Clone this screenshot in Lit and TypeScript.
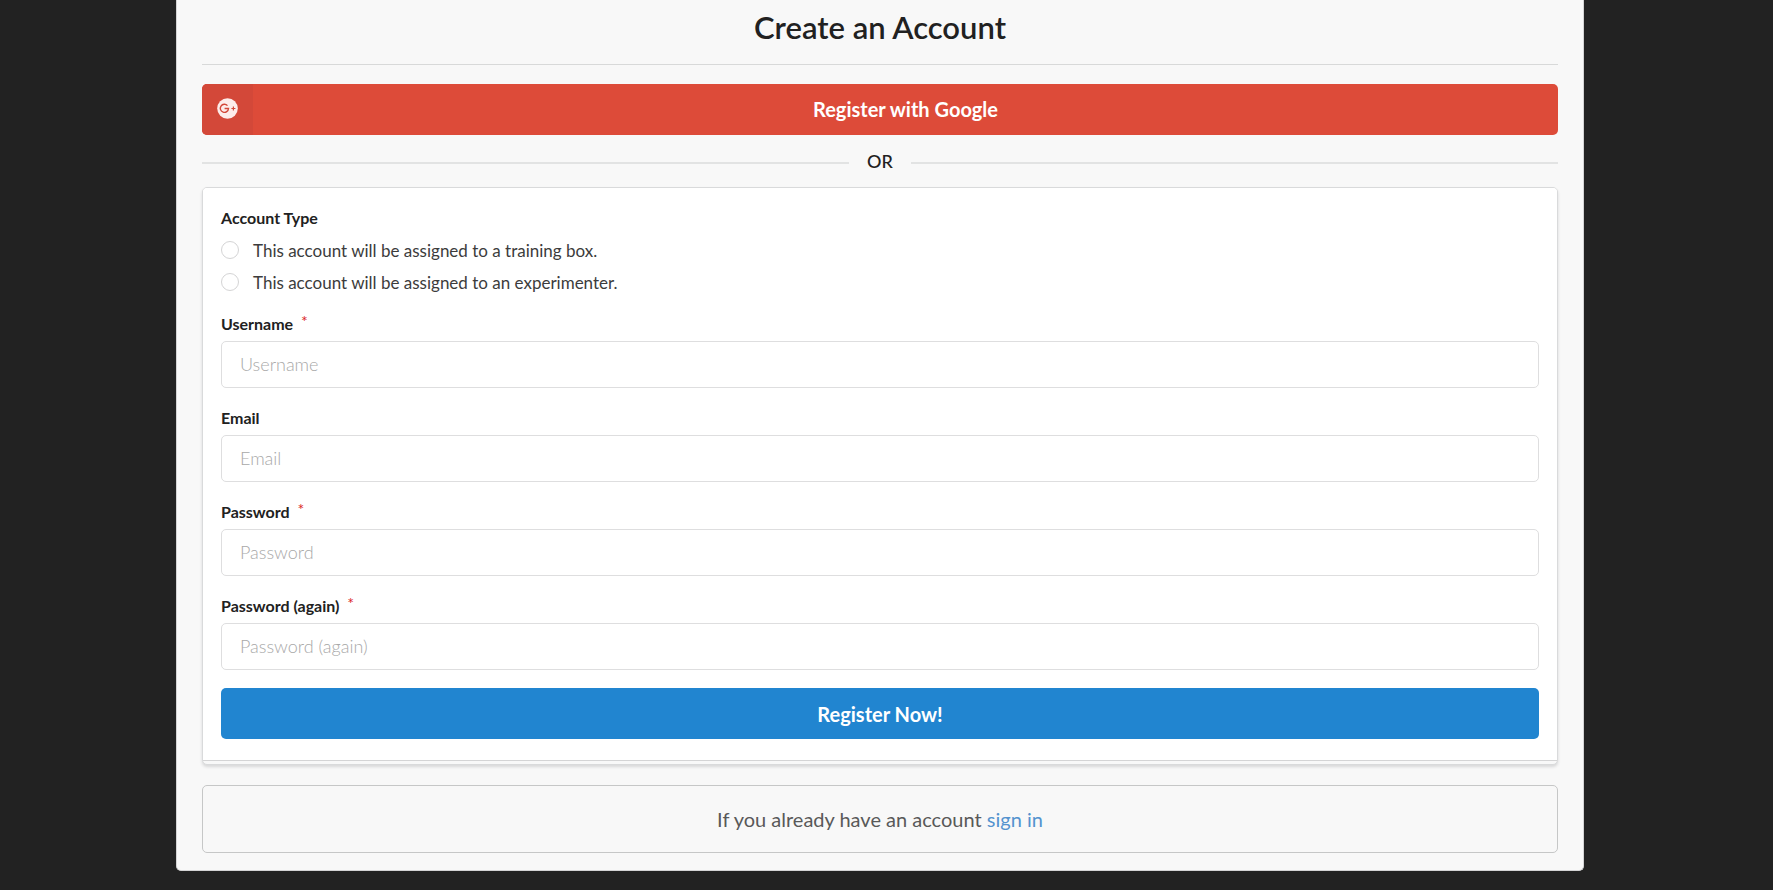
import { LitElement, html, css, nothing } from "lit";
import { customElement, property } from "lit/decorators.js";

interface Field {
  id: string;
  label: string;
  type: string;
  required: boolean;
}

const FIELDS: Field[] = [
  { id: "username", label: "Username", type: "text", required: true },
  { id: "email", label: "Email", type: "email", required: false },
  { id: "password", label: "Password", type: "password", required: true },
  { id: "password2", label: "Password (again)", type: "password", required: true },
];

const ACCOUNT_TYPES = [
  { value: "box", label: "This account will be assigned to a training box." },
  { value: "experimenter", label: "This account will be assigned to an experimenter." },
];

@customElement("register-form")
export class RegisterForm extends LitElement {
  @property({ attribute: false }) fields: Field[] = [];

  static styles = css`
    :host {
      display: block;
    }
    * {
      box-sizing: border-box;
    }
    .card {
      background: #f8f8f8;
      border: 1px solid #d9dadb;
      border-radius: 5px;
      box-shadow: 0 2px 3px rgba(34, 36, 38, 0.15);
      padding-bottom: 3px;
    }
    .body {
      background: #fff;
      border-bottom: 1px solid #d4d4d5;
      border-radius: 4px 4px 0 0;
      padding: 18px 18px 21px;
    }
    .types {
      border: 0;
      margin: 0 0 14px;
      padding: 0;
    }
    .label {
      display: block;
      padding: 0;
      font-size: 16px;
      font-weight: 700;
      line-height: 24px;
      color: #212121;
    }
    .types .label {
      margin-bottom: 4px;
    }
    .choice {
      display: flex;
      align-items: center;
      gap: 14px;
      height: 32px;
      font-size: 17px;
      font-weight: 400;
      color: #3c3c3c;
    }
    .radio {
      appearance: none;
      width: 18px;
      height: 18px;
      margin: 0;
      border: 1px solid #d4d4d5;
      border-radius: 50%;
      background: #fff;
    }
    .radio:checked {
      border-color: #2185d0;
      box-shadow: inset 0 0 0 4px #fff;
      background: #2185d0;
    }
    .field {
      margin-bottom: 18px;
    }
    .field .label {
      margin-bottom: 5px;
    }
    .star {
      margin-left: 4px;
      color: #db2828;
      font-weight: 400;
      vertical-align: 3px;
      line-height: 16px;
    }
    .input {
      display: block;
      width: 100%;
      height: 47px;
      padding: 0 18px 1px;
      border: 1px solid #dededf;
      border-radius: 5px;
      background: #fff;
      font: 300 18px "Lato", sans-serif;
      color: #212121;
      outline: none;
    }
    .input::placeholder {
      color: #a8a8a8;
      opacity: 1;
    }
    .input:focus {
      border-color: #85b7d9;
    }
    .submit {
      display: block;
      width: 100%;
      height: 51px;
      padding: 0;
      border: 0;
      border-radius: 5px;
      background: #2185d0;
      color: #fff;
      font: 700 20px "Lato", sans-serif;
      cursor: pointer;
    }
  `;

  render() {
    return html`
      <form class="card" @submit=${(e: Event) => e.preventDefault()}>
        <div class="body">
          <fieldset class="types">
            <legend class="label">Account Type</legend>
            ${ACCOUNT_TYPES.map(
              (t) => html`<label class="choice">
                <input class="radio" type="radio" name="type" value=${t.value} />
                <span>${t.label}</span>
              </label>`
            )}
          </fieldset>
          ${this.fields.map(
            (f) => html`<div class="field">
              <label class="label" for=${f.id}
                >${f.label} ${f.required ? html`<span class="star">*</span>` : nothing}</label
              >
              <input class="input" id=${f.id} type=${f.type} placeholder=${f.label} />
            </div>`
          )}
          <button class="submit" type="submit">Register Now!</button>
        </div>
      </form>
    `;
  }
}

@customElement("app-root")
export class AppRoot extends LitElement {
  static styles = css`
    :host {
      display: block;
      min-height: 100vh;
      box-sizing: border-box;
      padding-right: 13px;
      background: #222;
      font-family: "Lato", sans-serif;
      color: #212121;
    }
    * {
      box-sizing: border-box;
    }
    .panel {
      width: 80%;
      margin: 0 auto;
      padding: 7px 25px 17px;
      background: #f8f8f8;
      border: 1px solid #d4d4d5;
      border-top: 0;
      border-radius: 0 0 5px 5px;
    }
    .title {
      margin: 0 0 19px;
      padding-bottom: 17px;
      border-bottom: 1px solid #d8d9d9;
      font-size: 31px;
      font-weight: 600;
      line-height: 40px;
      text-align: center;
    }
    .google {
      display: flex;
      align-items: center;
      width: 100%;
      height: 51px;
      padding: 0;
      border: 0;
      border-radius: 5px;
      overflow: hidden;
      background: #dd4b39;
      color: #fff;
      font: 700 20px "Lato", sans-serif;
      cursor: pointer;
    }
    .mark {
      display: flex;
      align-items: center;
      justify-content: center;
      width: 51px;
      height: 51px;
      padding-bottom: 2px;
      background: #d34839;
    }
    .caption {
      flex: 1;
      padding-bottom: 2px;
    }
    .or {
      display: flex;
      align-items: center;
      gap: 18px;
      height: 51px;
      margin-bottom: 1px;
      font-size: 18px;
      font-weight: 500;
      line-height: 24px;
    }
    .or::before,
    .or::after {
      content: "";
      flex: 1;
      height: 2px;
      margin-top: 4px;
      background: #e2e3e3;
    }
    .note {
      margin: 20px 0 0;
      padding: 20px;
      border: 1px solid #c6c7c7;
      border-radius: 5px;
      font-size: 20px;
      line-height: 26px;
      text-align: center;
      color: #595959;
    }
    .link {
      color: #5493cf;
      text-decoration: none;
    }
  `;

  render() {
    return html`
      <main class="panel">
        <h1 class="title">Create an Account</h1>
        <button class="google" type="button">
          <span class="mark">
            <svg width="21" height="21" viewBox="0 0 21 21" aria-hidden="true">
              <circle cx="10.5" cy="10.5" r="10.3" fill="#fdecea" />
              <path
                d="M10.5 7.6A4.1 4.1 0 1 0 11.5 10.5H7.6"
                fill="none"
                stroke="#d34839"
                stroke-width="1.4"
              />
              <path d="M16.4 8.5V12.5M14.4 10.5H18.4" fill="none" stroke="#d34839" stroke-width="1.2" />
            </svg>
          </span>
          <span class="caption">Register with Google</span>
        </button>
        <div class="or">OR</div>
        <register-form .fields=${FIELDS}></register-form>
        <p class="note">If you already have an account <a class="link" href="#signin">sign in</a></p>
      </main>
    `;
  }
}
